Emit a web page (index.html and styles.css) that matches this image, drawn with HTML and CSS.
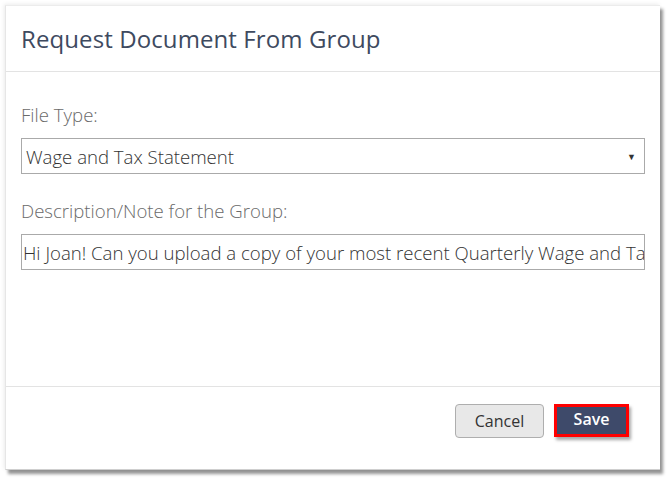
FILE: index.html
```html
<!DOCTYPE html>
<html>
<head>
<meta charset="utf-8">
<link rel="stylesheet" href="styles.css">
</head>
<body>
<div class="modal">
  <div class="modal-header">
    <h1 class="modal-title">Request Document From Group</h1>
  </div>
  <div class="modal-body">
    <div class="field">
      <label class="label">File Type:</label>
      <div class="select">
        <span class="select-text">Wage and Tax Statement</span>
        <span class="caret">&#9660;</span>
      </div>
    </div>
    <div class="field">
      <label class="label">Description/Note for the Group:</label>
      <div class="input">
        <span class="input-text">Hi Joan! Can you upload a copy of your most recent Quarterly Wage and Tax Statement?</span>
      </div>
    </div>
  </div>
  <div class="modal-footer">
    <button class="btn btn-cancel">Cancel</button>
    <button class="btn btn-save">Save</button>
  </div>
</div>
</body>
</html>
```
FILE: styles.css
```css
html, body {
  margin: 0;
  padding: 0;
  background: #ffffff;
}
body {
  font-family: "Open Sans", "Liberation Sans", sans-serif;
  padding: 5px 0 9px 5px;
}
.modal {
  width: 655px;
  height: 465px;
  background: #fff;
  box-sizing: border-box;
  border-left: 1px solid #e6e6e6;
  border-top: 1px solid #ececec;
  border-bottom: 1px solid #cfcfcf;
  box-shadow: 3px 4px 3px rgba(0,0,0,0.42), -1px -1px 4px rgba(0,0,0,0.08);
  display: flex;
  flex-direction: column;
}
.modal-header {
  height: 66px;
  flex: none;
  box-sizing: border-box;
  border-bottom: 1px solid #e3e3e3;
  padding: 0 15px;
  display: flex;
  align-items: center;
}
.modal-title {
  margin: 0;
  font-size: 24px;
  font-weight: 400;
  color: #3e4a5f;
  letter-spacing: 0.1px;
}
.modal-body {
  flex: 1;
  padding: 31px 15px 0 15px;
  display: flex;
  flex-direction: column;
  gap: 25px;
}
.field {
  display: flex;
  flex-direction: column;
  gap: 11px;
}
.label {
  font-size: 18.6px;
  font-weight: 300;
  color: #6a6a6a;
  line-height: 24px;
}
.select, .input {
  height: 36px;
  box-sizing: border-box;
  border: 1px solid #aaaaaa;
  display: flex;
  align-items: center;
  padding: 0 5px 0 4px;
  font-size: 18.6px;
  font-weight: 300;
  color: #333;
  overflow: hidden;
  white-space: nowrap;
}
.select {
  justify-content: space-between;
}
.input {
  padding-left: 1px;
}
.caret {
  font-size: 9px;
  font-weight: 400;
  color: #333;
  margin-right: 3px;
}
.modal-footer {
  height: 83px;
  flex: none;
  box-sizing: border-box;
  border-top: 1px solid #e3e3e3;
  display: flex;
  justify-content: flex-end;
  align-items: flex-start;
  padding: 17px 31px 0 0;
  gap: 10px;
}
.btn {
  font-family: "Open Sans", "Liberation Sans", sans-serif;
  font-size: 16px;
  height: 34px;
  box-sizing: border-box;
  cursor: pointer;
}
.btn-cancel {
  width: 89px;
  background: #e8e8e8;
  border: 1px solid #aeaeae;
  border-radius: 4px;
  color: #333;
  font-weight: 400;
}
.btn-save {
  width: 75px;
  height: 33px;
  background: #3e4a6a;
  border: 3px solid #ff0000;
  color: #fff;
  font-weight: 600;
  padding: 0 0 4px 0;
  box-shadow: 2px 3px 3px rgba(0,0,0,0.35);
}
```
